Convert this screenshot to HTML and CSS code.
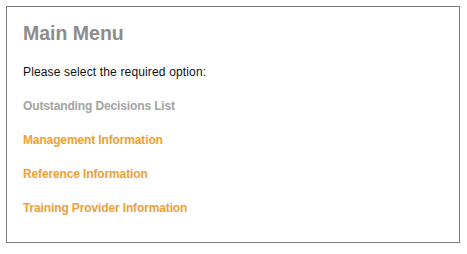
FILE: index.html
```html
<!DOCTYPE html>
<html lang="en">
<head>
<meta charset="utf-8">
<title>Main Menu</title>
<link rel="stylesheet" href="styles.css">
</head>
<body>
<div class="panel">
  <h1 class="title">Main Menu</h1>
  <p class="intro">Please select the required option:</p>
  <ul class="menu">
    <li><span class="item item-disabled">Outstanding Decisions List</span></li>
    <li><a class="item" href="#">Management Information</a></li>
    <li><a class="item" href="#">Reference Information</a></li>
    <li><a class="item" href="#">Training Provider Information</a></li>
  </ul>
</div>
</body>
</html>
```

FILE: styles.css
```css
html, body {
  margin: 0;
  padding: 0;
  background: #ffffff;
}

body {
  font-family: "Liberation Sans", Arial, sans-serif;
  padding: 6px;
}

.panel {
  box-sizing: border-box;
  width: 454px;
  height: 237px;
  border: 1px solid #7c7c7c;
  padding: 14px 16px 0 16px;
}

.title {
  margin: 0 0 19px 0;
  font-size: 19.5px;
  line-height: 24px;
  font-weight: bold;
  color: #8c8c8c;
}

.intro {
  margin: 0 0 18px 0;
  font-size: 12px;
  line-height: 16px;
  letter-spacing: 0.15px;
  color: #111111;
}

.menu {
  list-style: none;
  margin: 0;
  padding: 0;
  display: flex;
  flex-direction: column;
  gap: 18px;
}

.menu li {
  font-size: 12px;
  line-height: 16px;
}

.item {
  font-weight: bold;
  letter-spacing: -0.13px;
  color: #f0a030;
  text-decoration: none;
}

.item-disabled {
  color: #a3a3a3;
}
```
